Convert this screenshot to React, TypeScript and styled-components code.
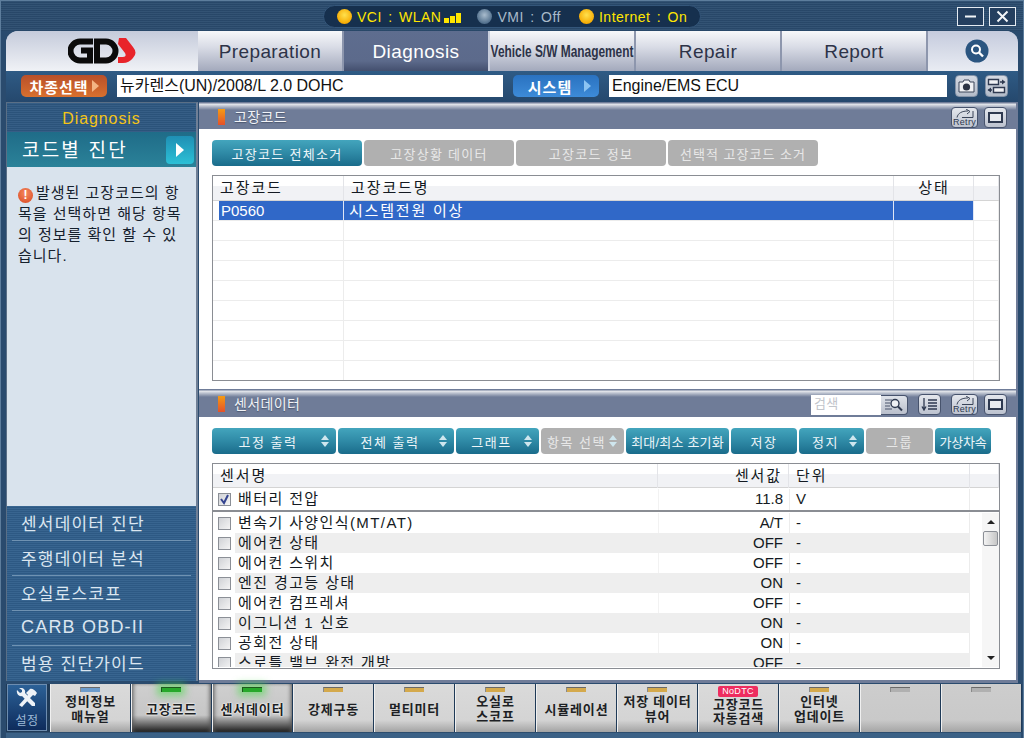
import styled, { createGlobalStyle, css } from 'styled-components'

const FONT = `"Liberation Sans", "Noto Sans CJK KR", sans-serif`

const GlobalStyle = createGlobalStyle`
  html, body { margin: 0; padding: 0; background: #2a4c70; }
  * { box-sizing: border-box; }
  body { font-family: ${FONT}; }
`

const stripes = css`
  background-image: repeating-linear-gradient(to bottom, rgba(255, 255, 255, 0.045) 0 1px, rgba(0, 0, 0, 0.05) 1px 2px);
`

const Window = styled.div`
  width: 1024px;
  height: 738px;
  overflow: hidden;
  display: flex;
  flex-direction: column;
  background-color: #2a4b6e;
  border: 1px solid #5d7d9c;
  border-bottom: 0;
`

/* title bar */
const TitleBar = styled.div`
  height: 30px;
  flex: none;
  display: grid;
  grid-template-columns: 1fr 378px 1fr;
  align-items: center;
  background-color: #2a4b6e;
  ${stripes};
`

const StatusPill = styled.div`
  grid-column: 2;
  height: 23px;
  margin-top: 1px;
  border-radius: 12px;
  background: #16304e;
  border: 1px solid #34567a;
  display: flex;
  align-items: center;
  padding-left: 13px;
  font-size: 14px;
  white-space: nowrap;
`

const Led = styled.span<{ $off?: boolean }>`
  width: 15px;
  height: 15px;
  border-radius: 50%;
  flex: none;
  margin-right: 5px;
  background: ${(p) =>
    p.$off
      ? 'radial-gradient(circle at 50% 40%, #a9bccd, #52708d 70%)'
      : 'radial-gradient(circle at 50% 40%, #ffe14d, #f5a800 75%)'};
`

const StatusText = styled.span<{ $off?: boolean; $after: number }>`
  color: ${(p) => (p.$off ? '#a9bac9' : '#ffe600')};
  font-weight: ${(p) => (p.$off ? 400 : 500)};
  letter-spacing: 0.5px;
  word-spacing: 2px;
  margin-right: ${(p) => p.$after}px;
`

const Signal = styled.span`
  display: inline-flex;
  align-items: flex-end;
  gap: 1px;
  height: 10px;
  margin-left: 3px;
  vertical-align: -1px;
`

const SignalBar = styled.i<{ $h: number }>`
  display: block;
  width: 5px;
  height: ${(p) => p.$h}px;
  background: #ffe600;
`

const WindowButtons = styled.div`
  display: flex;
  justify-content: flex-end;
  gap: 5px;
  padding-right: 7px;
`

const WindowButton = styled.button`
  width: 27px;
  height: 19px;
  padding: 0;
  display: flex;
  align-items: center;
  justify-content: center;
  border: 1px solid #e4ebf2;
  background: #243f5f;
`

/* main tabs */
const NavRow = styled.nav`
  height: 40px;
  flex: none;
  margin: 0 5px;
  display: flex;
  background: #c9cfde;
  border-radius: 12px 12px 0 0;
  overflow: hidden;
`

const LogoCell = styled.div`
  width: 192px;
  flex: none;
  display: flex;
  align-items: center;
  justify-content: center;
  padding: 0 1px 1px 0;
  background: linear-gradient(#c5cbdb, #f0f2f6);
`

const Tab = styled.div<{ $active?: boolean; $tight?: boolean }>`
  width: 146px;
  flex: none;
  display: flex;
  align-items: center;
  justify-content: center;
  padding-top: 2px;
  font-size: ${(p) => (p.$tight ? '17px' : '19px')};
  letter-spacing: ${(p) => (p.$tight ? '0' : '0.4px')};
  white-space: nowrap;
  overflow: hidden;
  color: ${(p) => (p.$active ? '#fff' : '#2d3348')};
  background: ${(p) =>
    p.$active
      ? 'linear-gradient(#5e6d8f, #5c6a8b 75%, #434f6e)'
      : 'linear-gradient(#f7f8fa, #d9dce6 40%, #a3a9bc)'};
  border-right: 2px solid ${(p) => (p.$active ? '#c9cfde' : '#8d96ad')};
  ${(p) => (p.$tight ? 'font-weight: 700;' : '')}
`

const TightLabel = styled.span`
  display: inline-block;
  transform: scaleX(0.7);
`

const SearchCell = styled.div`
  flex: 1;
  display: flex;
  align-items: center;
  justify-content: center;
  padding-left: 8px;
  background: linear-gradient(#c5cbdd, #e9ecf3);
`

/* vehicle selector row */
const SelectorRow = styled.div`
  height: 31px;
  flex: none;
  margin: 0 5px;
  display: flex;
  align-items: center;
  padding-left: 15px;
  padding-bottom: 1px;
  background: linear-gradient(#2f5b85, #25486d);
`

const PickButton = styled.div<{ $tone: 'orange' | 'blue' }>`
  width: 86px;
  height: 22px;
  flex: none;
  border-radius: 5px;
  display: flex;
  align-items: center;
  justify-content: center;
  gap: ${(p) => (p.$tone === 'orange' ? 3 : 12)}px;
  padding-left: ${(p) => (p.$tone === 'orange' ? 0 : 7)}px;
  color: #fff;
  font-size: 15px;
  font-weight: 700;
  letter-spacing: 1px;
  background: ${(p) =>
    p.$tone === 'orange'
      ? 'linear-gradient(#b9502a, #d8702e)'
      : 'linear-gradient(#2a72c0, #3d8bd8)'};
`

const PickArrow = styled.i<{ $tone: 'orange' | 'blue' }>`
  width: 0;
  height: 0;
  border-left: 7px solid ${(p) => (p.$tone === 'orange' ? '#f3b584' : '#8cc4f2')};
  border-top: 6px solid transparent;
  border-bottom: 6px solid transparent;
`

const ValueField = styled.div<{ $width: number }>`
  width: ${(p) => p.$width}px;
  height: 22px;
  flex: none;
  margin: 0 10px;
  padding-left: 3px;
  background: #fff;
  color: #111;
  font-size: 16px;
  line-height: 21px;
  white-space: nowrap;
`

const ToolIcon = styled.div<{ $gap: number }>`
  width: 23px;
  height: 22px;
  flex: none;
  margin-left: ${(p) => p.$gap}px;
  border-radius: 4px;
  border: 1px solid #8493a8;
  display: flex;
  align-items: center;
  justify-content: center;
  background: linear-gradient(#d5d9e2, #b3bbc9);
`

/* body */
const Body = styled.div`
  height: 581px;
  flex: none;
  margin: 0 5px;
  display: flex;
  gap: 1px;
`

const Sidebar = styled.aside`
  width: 192px;
  flex: none;
  margin-bottom: 2px;
  display: flex;
  flex-direction: column;
  border: 1px solid #5a6f86;
  border-right: 2px solid #6f7f96;
  border-bottom: 0;
  background-color: #315e88;
`

const SideTitle = styled.div`
  height: 29px;
  flex: none;
  text-align: center;
  line-height: 31px;
  font-size: 16px;
  letter-spacing: 0.9px;
  color: #f5c518;
  background-color: #2d5781;
  ${stripes};
`

const SideActive = styled.div`
  height: 35px;
  flex: none;
  display: flex;
  align-items: center;
  justify-content: space-between;
  padding: 0 2px 0 15px;
  color: #fff;
  font-size: 19px;
  letter-spacing: 2.2px;
  background: linear-gradient(#1f6c88, #2b8299);
`

const SideActiveLabel = styled.span`
  margin-top: -3px;
`

const SideArrow = styled.span`
  width: 28px;
  height: 28px;
  border-radius: 4px;
  display: flex;
  align-items: center;
  justify-content: center;
  background: linear-gradient(#1f8fb4, #2cc0d6);
`

const SideArrowGlyph = styled.i`
  width: 0;
  height: 0;
  border-left: 8px solid #fff;
  border-top: 7px solid transparent;
  border-bottom: 7px solid transparent;
`

const SideHelp = styled.div`
  flex: 1;
  padding: 15px 0 0 11px;
  background: #d9e3ed;
  color: #15202c;
  font-size: 15px;
  line-height: 21px;
  letter-spacing: 1px;
  white-space: nowrap;
`

const HelpBadge = styled.span`
  display: inline-block;
  width: 15px;
  height: 15px;
  margin-right: 3px;
  border-radius: 50%;
  background: radial-gradient(circle at 50% 35%, #f58a60, #d8461f);
  color: #fff;
  font-size: 12px;
  font-weight: 700;
  line-height: 15px;
  text-align: center;
  letter-spacing: 0;
  vertical-align: -1px;
`

const SideNavList = styled.div`
  flex: none;
  display: flex;
  flex-direction: column;
  background-color: #2f5e8b;
  ${stripes};
`

const SideNavItem = styled.div<{ $latin?: boolean }>`
  height: 35px;
  margin: 0 5px;
  padding: 0 9px 2px;
  display: flex;
  align-items: center;
  color: #dbe6f0;
  font-size: ${(p) => (p.$latin ? 18 : 17)}px;
  letter-spacing: 1.2px;
  white-space: nowrap;
  &:not(:last-child) {
    border-bottom: 1px solid #6f92b2;
  }
`

const Content = styled.main`
  flex: 1;
  min-width: 0;
  display: flex;
  flex-direction: column;
  background: #fff;
  border-right: 2px solid #6f7c98;
  border-bottom: 3px solid #6f7c98;
`

const PanelHead = styled.header<{ $height: number }>`
  height: ${(p) => p.$height}px;
  flex: none;
  display: flex;
  align-items: center;
  padding: 0 9px 0 19px;
  color: #f1f3f7;
  font-size: 14px;
  letter-spacing: 0.4px;
  text-shadow: 0 1px 1px rgba(40, 50, 70, 0.5);
  background: linear-gradient(#6f7c98 1px, #e9ebef 2px, #a9b1c2 5px, #6f7c98 8px, #6f7c98);
`

const PanelMark = styled.i`
  width: 7px;
  height: 16px;
  margin: 2px 9px 0 0;
  flex: none;
  background: linear-gradient(#f59b13, #e4512a);
`

const HeadTools = styled.div`
  margin-left: auto;
  display: flex;
  align-items: center;
  gap: 6px;
  padding-top: 3px;
`

const HeadButton = styled.div<{ $wide?: boolean; $spaced?: boolean }>`
  position: relative;
  width: ${(p) => (p.$wide ? 27 : 23)}px;
  height: 21px;
  margin: 0 ${(p) => (p.$spaced ? 4 : 0)}px;
  border: 1px solid #47536d;
  border-radius: 4px;
  background: linear-gradient(#e4e7ed, #bcc2cf);
  display: flex;
  align-items: center;
  justify-content: center;
  color: #2e3950;
  text-shadow: none;
`

const RetryLabel = styled.span`
  position: absolute;
  left: 0;
  right: 0;
  bottom: 0;
  text-align: center;
  font-size: 9px;
  line-height: 9px;
  letter-spacing: 0.3px;
`

const RetryArt = styled.svg`
  position: absolute;
  left: 2px;
  top: 1px;
`

const SearchBox = styled.div`
  width: 70px;
  height: 20px;
  padding-left: 3px;
  background: #fff;
  color: #c2c5cb;
  font-size: 13px;
  line-height: 18px;
  letter-spacing: 0.4px;
  text-shadow: none;
`

const SearchGo = styled.div`
  width: 27px;
  height: 20px;
  margin-left: -6px;
  border: 1px solid #47536d;
  border-left: 0;
  border-radius: 0 4px 4px 0;
  background: linear-gradient(#dfe3ea, #b9bfcc);
  display: flex;
  align-items: center;
  justify-content: center;
`

const PanelBody = styled.section<{ $height: number }>`
  height: ${(p) => p.$height}px;
  flex: none;
  padding: 11px 0 0 13px;
`

const ButtonRow = styled.div`
  height: 26px;
  display: flex;
  gap: 2px;
`

const ActionButton = styled.div<{ $width: number; $off?: boolean; $spin?: boolean; $track?: number }>`
  width: ${(p) => p.$width}px;
  flex: none;
  position: relative;
  display: flex;
  align-items: center;
  justify-content: center;
  padding-right: ${(p) => (p.$spin ? 12 : 0)}px;
  border-radius: 4px;
  color: ${(p) => (p.$off ? '#e8e8e8' : '#eef6f9')};
  font-size: 13px;
  letter-spacing: ${(p) => p.$track ?? 1.5}px;
  white-space: nowrap;
  background: ${(p) =>
    p.$off
      ? '#b0b0b0'
      : 'linear-gradient(#43a5bd, #2f8aa6 50%, #1a6c8b)'};
`

const Spinner = styled.span`
  position: absolute;
  right: 7px;
  top: 7px;
  display: flex;
  flex-direction: column;
  gap: 2px;
`

const SpinUp = styled.i`
  width: 0;
  height: 0;
  border-left: 4px solid transparent;
  border-right: 4px solid transparent;
  border-bottom: 5px solid #cfe6ee;
`

const SpinDown = styled(SpinUp)`
  transform: rotate(180deg);
`

const TableFrame = styled.div`
  width: 788px;
  height: 206px;
  margin-top: 9px;
  border: 1px solid #8a8d93;
  overflow: hidden;
  color: #141a22;
  font-size: 15px;
`

const HeadRow = styled.div<{ $cols: string; $height: number }>`
  height: ${(p) => p.$height}px;
  display: grid;
  grid-template-columns: ${(p) => p.$cols};
  border-bottom: 1px solid #d4d4d4;
  background: linear-gradient(#fff 42%, #f1f2f5 42%);
`

const HeadCell = styled.div<{ $center?: boolean; $right?: boolean }>`
  padding: 0 6px 0 7px;
  line-height: 24px;
  letter-spacing: 1.9px;
  white-space: nowrap;
  border-right: 1px solid #e3e4e8;
  text-align: ${(p) => (p.$center ? 'center' : p.$right ? 'right' : 'left')};
`

const Row = styled.div<{ $cols: string }>`
  height: 20px;
  display: grid;
  grid-template-columns: ${(p) => p.$cols};
  border-bottom: 1px solid #ececec;
`

const Cell = styled.div<{ $selected?: boolean; $first?: boolean }>`
  padding: 0 0 0 ${(p) => (p.$first ? 2 : 5)}px;
  margin-left: ${(p) => (p.$first ? 6 : 0)}px;
  line-height: 19px;
  white-space: nowrap;
  border-right: 1px solid ${(p) => (p.$selected ? '#dfe6f5' : '#ececec')};
  ${(p) => (p.$selected ? 'background: #3068c8; color: #fff;' : '')}
`

const CellKo = styled.span`
  letter-spacing: 1.8px;
`

const CheckBox = styled.span`
  width: 13px;
  height: 13px;
  flex: none;
  margin: 4px 7px 0 5px;
  border: 1px solid #8b8f96;
  background: linear-gradient(135deg, #d0d2d6, #f5f5f5);
  display: flex;
  align-items: center;
  justify-content: center;
`

const NameCell = styled.div<{ $shaded?: boolean }>`
  display: flex;
  white-space: nowrap;
  line-height: 20px;
  letter-spacing: 1.4px;
  background: linear-gradient(to right, #fff 22px, ${(p) => (p.$shaded ? '#eee' : '#fff')} 22px);
`

const NumberCell = styled.div<{ $shaded?: boolean }>`
  line-height: 20px;
  padding-right: 6px;
  text-align: right;
  border-left: 1px solid ${(p) => (p.$shaded ? '#eee' : '#f2f2f2')};
  background: ${(p) => (p.$shaded ? '#eee' : 'transparent')};
`

const UnitCell = styled.div<{ $shaded?: boolean }>`
  line-height: 20px;
  padding-left: 6px;
  border-left: 1px solid ${(p) => (p.$shaded ? '#eee' : '#ececec')};
  border-right: 1px solid ${(p) => (p.$shaded ? '#eee' : '#ececec')};
  background: ${(p) => (p.$shaded ? '#eee' : 'transparent')};
`

const SensorRow = styled.div<{ $cols: string; $pinned?: boolean }>`
  height: ${(p) => (p.$pinned ? 24 : 20)}px;
  flex: none;
  display: grid;
  grid-template-columns: ${(p) => p.$cols};
  ${(p) => (p.$pinned ? 'padding-top: 1px; border-bottom: 2px solid #8a8d93;' : '')}
`

const ScrollArea = styled.div`
  height: 154px;
  margin-top: 1px;
  display: flex;
`

const ScrollRows = styled.div`
  width: 769px;
  flex: none;
  height: 154px;
  overflow: hidden;
  display: flex;
  flex-direction: column;
`

const ScrollBar = styled.div`
  flex: 1;
  padding: 0 1px 0 1px;
  display: flex;
  flex-direction: column;
  background: #f6f6f6;
`

const ScrollStep = styled.div`
  height: 18px;
  flex: none;
  display: flex;
  align-items: center;
  justify-content: center;
`

const ScrollThumb = styled.div`
  height: 15px;
  flex: none;
  border: 1px solid #8b8f96;
  border-radius: 2px;
  background: linear-gradient(to right, #f3f3f3, #c6c6c6);
`

const ScrollTrack = styled.div`
  flex: 1;
`

const Tri = styled.i<{ $down?: boolean }>`
  width: 0;
  height: 0;
  border-left: 4px solid transparent;
  border-right: 4px solid transparent;
  ${(p) => (p.$down ? 'border-top: 4px solid #222;' : 'border-bottom: 4px solid #222;')}
`

/* dock */
const Dock = styled.footer`
  height: 54px;
  flex: none;
  margin: 1px 2px 0 5px;
  display: flex;
  align-items: flex-start;
  background: linear-gradient(#1f3a57 48px, #3b6186 49px);
`

const SettingsButton = styled.div`
  width: 40px;
  height: 47px;
  flex: none;
  margin: 0 3px 0 1px;
  border: 1px solid #6d8db0;
  display: flex;
  flex-direction: column;
  align-items: center;
  justify-content: center;
  gap: 3px;
  color: #9db9d6;
  font-size: 12px;
  letter-spacing: 0.5px;
  background: linear-gradient(#2c6197, #0e2c5c);
`

const DockItem = styled.div<{ $on?: boolean; $idle?: boolean; $badge?: boolean }>`
  width: 81px;
  height: 48px;
  flex: none;
  position: relative;
  display: flex;
  align-items: center;
  justify-content: center;
  padding-top: ${(p) => (p.$badge ? 7 : 2)}px;
  text-align: center;
  border-left: 1px solid #f0f0f0;
  border-right: 1px solid #1f3a57;
  color: #1d1f24;
  font-size: 13px;
  font-weight: 700;
  line-height: ${(p) => (p.$badge ? 14 : 15)}px;
  letter-spacing: 0.8px;
  white-space: nowrap;
  background: ${(p) =>
    p.$on
      ? 'linear-gradient(#cfcfcf, #c6c6c6 65%, #1c1c1c)'
      : p.$idle
        ? 'linear-gradient(#cdcdcd, #c9c9c9 75%, #a5a5a5)'
        : 'linear-gradient(#dadada, #d4d4d4 75%, #a3a3a3)'};
  ${(p) =>
    p.$on
      ? 'text-shadow: 0 0 2px #fff, 0 0 2px #fff; box-shadow: inset 3px 0 4px -2px #555, inset -3px 0 4px -2px #555;'
      : ''}
`

const DockLamp = styled.i<{ $color: string; $glow?: boolean }>`
  position: absolute;
  top: 3px;
  left: 29px;
  width: 20px;
  height: 5px;
  border-top: 1px solid #6a6a6a;
  border-left: 1px solid #8a8a8a;
  background: ${(p) => p.$color};
  ${(p) => (p.$glow ? `box-shadow: 0 0 7px 4px rgba(60, 220, 60, 0.5); border-color: #1d5a1d;` : '')}
`

const NoDtcBadge = styled.span`
  position: absolute;
  top: 2px;
  left: 19px;
  width: 40px;
  height: 11px;
  border-radius: 2px;
  background: #ee2c5f;
  color: #fff;
  font-size: 9px;
  font-weight: 400;
  line-height: 11px;
  letter-spacing: 0.3px;
`

function GdsLogo() {
  return (
    <svg width="68" height="26" viewBox="0 0 68 26" aria-label="GDS">
      <path d="M25 3.5 H12 a9.5 9.5 0 0 0 0 19 H22 V12.5 H13" fill="none" stroke="#0b0b0b" strokeWidth="6" />
      <path d="M29 3.5 H38 a9.5 9.5 0 0 1 0 19 H29 Z" fill="none" stroke="#0b0b0b" strokeWidth="6" />
      <path d="M51 0 H58 L65 9 Q70 15 65 20 Q61 25 55 25 H50 V19 H55 Q59 19 57 15 L50 6 Z" fill="#e8242a" />
    </svg>
  )
}

function MagnifierBadge() {
  return (
    <svg width="24" height="24" viewBox="0 0 24 24">
      <circle cx="12" cy="12" r="11.5" fill="#2a5580" />
      <circle cx="11" cy="10.5" r="4" fill="none" stroke="#fff" strokeWidth="2" />
      <path d="M14 13.5 L18 17.5" stroke="#fff" strokeWidth="2.4" />
    </svg>
  )
}

function ToolsGlyph() {
  return (
    <svg width="22" height="20" viewBox="0 0 22 20">
      <path d="M1 2 L4 5 L6 4 L6 2 L3 0 C7 -1 10 2 9 5 L19 15 L19 18 L16 18 L6 8 C3 9 0 6 1 2 Z" fill="#eef2f7" />
      <path d="M3 17 L12 7 L10 5 L14 1 C16 0 19 2 21 5 L19 8 L17 7 L15 9 L6 19 Z" fill="#eef2f7" />
    </svg>
  )
}

function Retry() {
  return (
    <HeadButton $wide>
      <RetryArt width="21" height="9" viewBox="0 0 21 9">
        <path d="M3 8.5 C4 4 8 2 14 2 M12 0 L16 2.5 L13 5 M19 2 V8.5 H8" fill="none" stroke="#3a4458" strokeWidth="1" />
      </RetryArt>
      <RetryLabel>Retry</RetryLabel>
    </HeadButton>
  )
}

function Maximize() {
  return (
    <HeadButton>
      <svg width="15" height="11" viewBox="0 0 15 11">
        <rect x="1" y="1" width="13" height="9" fill="#e7eaf0" stroke="#2e3950" strokeWidth="2" />
      </svg>
    </HeadButton>
  )
}

function Spin() {
  return (
    <Spinner>
      <SpinUp />
      <SpinDown />
    </Spinner>
  )
}

function Check() {
  return (
    <svg width="11" height="11" viewBox="0 0 11 11">
      <path d="M2 5 L5 9 L9 1" fill="none" stroke="#33438f" strokeWidth="2" />
    </svg>
  )
}

const faultCols = '131px 550px 80px 1fr'
const sensorHeadCols = '445px 131px 181px 1fr'
const sensorRowCols = '445px 131px 181px 12px'

const faultButtons = ['고장코드 전체소거', '고장상황 데이터', '고장코드 정보', '선택적 고장코드 소거']

const sensorButtons = [
  { label: '고정 출력', width: 124, spin: true },
  { label: '전체 출력', width: 116, spin: true },
  { label: '그래프', width: 83, spin: true },
  { label: '항목 선택', width: 83, spin: true, off: true },
  { label: '최대/최소 초기화', width: 103, track: 0.2 },
  { label: '저장', width: 66 },
  { label: '정지', width: 65, spin: true },
  { label: '그룹', width: 67, off: true },
  { label: '가상차속', width: 56, track: -0.2 },
]

const sensorRows = [
  { name: '변속기 사양인식(MT/AT)', value: 'A/T' },
  { name: '에어컨 상태', value: 'OFF' },
  { name: '에어컨 스위치', value: 'OFF' },
  { name: '엔진 경고등 상태', value: 'ON' },
  { name: '에어컨 컴프레셔', value: 'OFF' },
  { name: '이그니션 1 신호', value: 'ON' },
  { name: '공회전 상태', value: 'ON' },
  { name: '스로틀 밸브 완전 개방', value: 'OFF' },
]

const sideItems = ['센서데이터 진단', '주행데이터 분석', '오실로스코프', 'CARB OBD-II', '범용 진단가이드']

const dockItems = [
  { lines: ['정비정보', '매뉴얼'], lamp: '#6d9ccc' },
  { lines: ['고장코드'], lamp: '#27a82b', on: true },
  { lines: ['센서데이터'], lamp: '#27a82b', on: true },
  { lines: ['강제구동'], lamp: '#d4a94c' },
  { lines: ['멀티미터'], lamp: '#d4a94c' },
  { lines: ['오실로', '스코프'], lamp: '#d4a94c' },
  { lines: ['시뮬레이션'], lamp: '#d4a94c' },
  { lines: ['저장 데이터', '뷰어'], lamp: '#d4a94c' },
  { lines: ['고장코드', '자동검색'], badge: true },
  { lines: ['인터넷', '업데이트'], lamp: '#d4a94c' },
  { lines: [], lamp: '#b0b0b0', idle: true },
  { lines: [], lamp: '#b0b0b0', idle: true },
]

export default function App() {
  return (
    <>
      <GlobalStyle />
      <Window>
        <TitleBar>
          <StatusPill>
            <Led />
            <StatusText $after={16}>
              VCI : WLAN
              <Signal>
                <SignalBar $h={5} />
                <SignalBar $h={7} />
                <SignalBar $h={10} />
              </Signal>
            </StatusText>
            <Led $off />
            <StatusText $off $after={18}>
              VMI : Off
            </StatusText>
            <Led />
            <StatusText $after={0}>Internet : On</StatusText>
          </StatusPill>
          <WindowButtons>
            <WindowButton aria-label="minimize">
              <svg width="11" height="3" viewBox="0 0 11 3">
                <rect width="11" height="2" y="0.5" fill="#f2f5f8" />
              </svg>
            </WindowButton>
            <WindowButton aria-label="close">
              <svg width="13" height="13" viewBox="0 0 13 13">
                <path d="M1.5 1.5 L11.5 11.5 M11.5 1.5 L1.5 11.5" stroke="#f2f5f8" strokeWidth="2" />
              </svg>
            </WindowButton>
          </WindowButtons>
        </TitleBar>

        <NavRow>
          <LogoCell>
            <GdsLogo />
          </LogoCell>
          <Tab>Preparation</Tab>
          <Tab $active>Diagnosis</Tab>
          <Tab $tight>
            <TightLabel>Vehicle S/W Management</TightLabel>
          </Tab>
          <Tab>Repair</Tab>
          <Tab>Report</Tab>
          <SearchCell>
            <MagnifierBadge />
          </SearchCell>
        </NavRow>

        <SelectorRow>
          <PickButton $tone="orange">
            차종선택
            <PickArrow $tone="orange" />
          </PickButton>
          <ValueField $width={386}>뉴카렌스(UN)/2008/L 2.0 DOHC</ValueField>
          <PickButton $tone="blue">
            시스템
            <PickArrow $tone="blue" />
          </PickButton>
          <ValueField $width={338}>Engine/EMS ECU</ValueField>
          <ToolIcon $gap={-2}>
            <svg width="17" height="14" viewBox="0 0 17 14">
              <path d="M1 3 H5 L6 1 H11 L12 3 H16 V13 H1 Z" fill="#f0f1f4" stroke="#3a4458" />
              <circle cx="8.5" cy="8" r="3.6" fill="#2d3444" />
            </svg>
          </ToolIcon>
          <ToolIcon $gap={7}>
            <svg width="19" height="16" viewBox="0 0 19 16">
              <path d="M1.5 1.5 H11.5 V6.5 H1.5 Z M6.5 9.5 H17.5 V14.5 H6.5 Z" fill="#f0f1f4" stroke="#2e3950" strokeWidth="1.4" />
              <path d="M13 4 H16 M1.5 12 H5" stroke="#2e3950" strokeWidth="1.4" />
              <path d="M15 1.5 L18.5 4 L15 6.5 Z M4 9.5 L0.5 12 L4 14.5 Z" fill="#2e3950" />
            </svg>
          </ToolIcon>
        </SelectorRow>

        <Body>
          <Sidebar>
            <SideTitle>Diagnosis</SideTitle>
            <SideActive>
              <SideActiveLabel>코드별 진단</SideActiveLabel>
              <SideArrow>
                <SideArrowGlyph />
              </SideArrow>
            </SideActive>
            <SideHelp>
              <HelpBadge>!</HelpBadge>발생된 고장코드의 항
              <br />
              목을 선택하면 해당 항목
              <br />
              의 정보를 확인 할 수 있
              <br />
              습니다.
            </SideHelp>
            <SideNavList>
              {sideItems.map((item) => (
                <SideNavItem key={item} $latin={item.startsWith('CARB')}>
                  {item}
                </SideNavItem>
              ))}
            </SideNavList>
          </Sidebar>

          <Content>
            <PanelHead $height={27}>
              <PanelMark />
              <span>고장코드</span>
              <HeadTools>
                <Retry />
                <Maximize />
              </HeadTools>
            </PanelHead>
            <PanelBody $height={260}>
              <ButtonRow>
                {faultButtons.map((label, index) => (
                  <ActionButton key={label} $width={150} $off={index > 0} $track={index === 3 ? 1 : 1.3}>
                    {label}
                  </ActionButton>
                ))}
              </ButtonRow>
              <TableFrame>
                <HeadRow $cols={faultCols} $height={25}>
                  <HeadCell>고장코드</HeadCell>
                  <HeadCell>고장코드명</HeadCell>
                  <HeadCell $center>상태</HeadCell>
                  <HeadCell />
                </HeadRow>
                <Row $cols={faultCols}>
                  <Cell $selected $first>
                    P0560
                  </Cell>
                  <Cell $selected>
                    <CellKo>시스템전원 이상</CellKo>
                  </Cell>
                  <Cell $selected />
                  <Cell />
                </Row>
                {Array.from({ length: 8 }, (_, index) => (
                  <Row key={index} $cols={faultCols}>
                    <Cell />
                    <Cell />
                    <Cell />
                    <Cell />
                  </Row>
                ))}
              </TableFrame>
            </PanelBody>

            <PanelHead $height={28}>
              <PanelMark />
              <span>센서데이터</span>
              <HeadTools>
                <SearchBox>검색</SearchBox>
                <SearchGo>
                  <svg width="20" height="15" viewBox="0 0 20 15">
                    <path d="M1 3 H8 M1 6 H6 M1 9 H6 M1 12 H8" stroke="#48536a" />
                    <circle cx="11" cy="6.5" r="4" fill="#eef0f4" stroke="#2e3950" strokeWidth="1.4" />
                    <path d="M14 9.5 L18 13.5" stroke="#2e3950" strokeWidth="2" />
                  </svg>
                </SearchGo>
                <HeadButton $spaced>
                  <svg width="17" height="13" viewBox="0 0 17 13">
                    <path d="M7 2 H16 M7 5 H16 M7 8 H16 M7 11 H16" stroke="#2e3950" strokeWidth="1.5" />
                    <path d="M3 0 V11 M1 8.5 L3 12 L5 8.5" fill="none" stroke="#2e3950" strokeWidth="1.3" />
                  </svg>
                </HeadButton>
                <Retry />
                <Maximize />
              </HeadTools>
            </PanelHead>
            <PanelBody $height={263}>
              <ButtonRow>
                {sensorButtons.map((button) => (
                  <ActionButton
                    key={button.label}
                    $width={button.width}
                    $off={button.off}
                    $spin={button.spin}
                    $track={button.track}
                  >
                    {button.label}
                    {button.spin ? <Spin /> : null}
                  </ActionButton>
                ))}
              </ButtonRow>
              <TableFrame>
                <HeadRow $cols={sensorHeadCols} $height={24}>
                  <HeadCell>센서명</HeadCell>
                  <HeadCell $right>센서값</HeadCell>
                  <HeadCell>단위</HeadCell>
                  <HeadCell />
                </HeadRow>
                <SensorRow $cols={sensorHeadCols} $pinned>
                  <NameCell>
                    <CheckBox>
                      <Check />
                    </CheckBox>
                    배터리 전압
                  </NameCell>
                  <NumberCell>11.8</NumberCell>
                  <UnitCell>V</UnitCell>
                  <span />
                </SensorRow>
                <ScrollArea>
                  <ScrollRows>
                    {sensorRows.map((row, index) => (
                      <SensorRow key={row.name} $cols={sensorRowCols}>
                        <NameCell $shaded={index % 2 === 1}>
                          <CheckBox />
                          {row.name}
                        </NameCell>
                        <NumberCell $shaded={index % 2 === 1}>{row.value}</NumberCell>
                        <UnitCell $shaded={index % 2 === 1}>-</UnitCell>
                        <span />
                      </SensorRow>
                    ))}
                  </ScrollRows>
                  <ScrollBar>
                    <ScrollStep>
                      <Tri />
                    </ScrollStep>
                    <ScrollThumb />
                    <ScrollTrack />
                    <ScrollStep>
                      <Tri $down />
                    </ScrollStep>
                  </ScrollBar>
                </ScrollArea>
              </TableFrame>
            </PanelBody>
          </Content>
        </Body>

        <Dock>
          <SettingsButton>
            <ToolsGlyph />
            설정
          </SettingsButton>
          {dockItems.map((item, index) => (
            <DockItem key={index} $on={item.on} $idle={item.idle} $badge={item.badge}>
              {item.badge ? <NoDtcBadge>NoDTC</NoDtcBadge> : <DockLamp $color={item.lamp ?? '#ccc'} $glow={item.on} />}
              <span>
                {item.lines.map((line) => (
                  <div key={line}>{line}</div>
                ))}
              </span>
            </DockItem>
          ))}
        </Dock>
      </Window>
    </>
  )
}
